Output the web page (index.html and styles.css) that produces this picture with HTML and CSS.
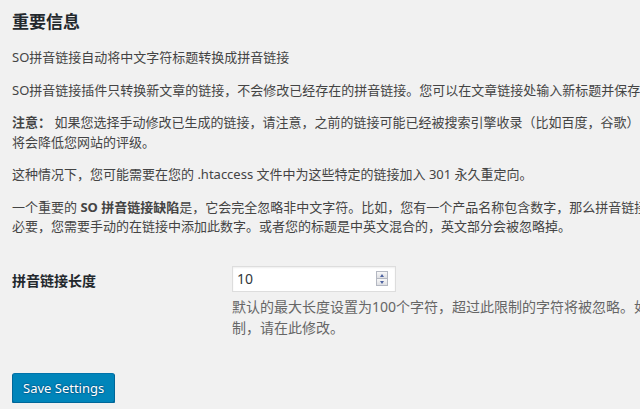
FILE: index.html
```html
<!DOCTYPE html>
<html lang="zh-CN">
<head>
    <meta charset="UTF-8">
    <meta name="viewport" content="width=device-width, initial-scale=1.0">
    <title>SO 拼音链接设置</title>
    <link rel="stylesheet" href="styles.css">
</head>
<body>
    <div class="wrap">
        <h2>重要信息</h2>
        <p>SO拼音链接自动将中文字符标题转换成拼音链接</p>
        <p>SO拼音链接插件只转换新文章的链接，不会修改已经存在的拼音链接。您可以在文章链接处输入新标题并保存，即可更新。</p>
        <p><strong>注意：</strong> 如果您选择手动修改已生成的链接，请注意，之前的链接可能已经被搜索引擎收录（比如百度，谷歌），修改后的链接将会降低您网站的评级。</p>
        <p>这种情况下，您可能需要在您的 .htaccess 文件中为这些特定的链接加入 301 永久重定向。</p>
        <p>一个重要的 <strong>SO 拼音链接缺陷</strong>是，它会完全忽略非中文字符。比如，您有一个产品名称包含数字，那么拼音链接忽略它，如有必要，您需要手动的在链接中添加此数字。或者您的标题是中英文混合的，英文部分会被忽略掉。</p>

        <form>
            <table class="form-table">
                <tr>
                    <th scope="row"><label for="slug-length">拼音链接长度</label></th>
                    <td>
                        <div class="number-field">
                            <input type="text" id="slug-length" value="10">
                            <span class="spin">
                                <span class="spin-btn spin-up"></span>
                                <span class="spin-btn spin-down"></span>
                            </span>
                        </div>
                        <p class="description">默认的最大长度设置为100个字符，超过此限制的字符将被忽略。如需更长的限制，请在此修改。</p>
                    </td>
                </tr>
            </table>
            <p class="submit"><button type="button" class="button-primary">Save Settings</button></p>
        </form>
    </div>
</body>
</html>
```

FILE: styles.css
```css
html, body {
    margin: 0;
    padding: 0;
    overflow: hidden;
}
body {
    background: #f1f1f1;
    color: #444;
    font-family: "Noto Sans", "Noto Sans CJK SC", sans-serif;
    font-size: 13px;
    line-height: 1.5;
    text-spacing-trim: space-all;
}
.wrap {
    width: 724px;
    padding: 0 12px;
}
h2 {
    color: #23282d;
    font-size: 17px;
    line-height: 22px;
    font-weight: 700;
    margin: 11px 0 15px;
}
p {
    margin: 13px 0;
}
strong {
    font-weight: 700;
}
.form-table {
    width: 100%;
    border-collapse: collapse;
    border-spacing: 0;
    margin: 0;
}
.form-table th {
    width: 200px;
    padding: 20px 10px 20px 0;
    text-align: left;
    vertical-align: top;
    color: #23282d;
    font-size: 14px;
    font-weight: 700;
    line-height: 21px;
}
.form-table td {
    padding: 15px 10px;
    vertical-align: top;
    font-size: 14px;
    line-height: 21px;
}
.number-field {
    display: flex;
    align-items: center;
    box-sizing: border-box;
    width: 164px;
    height: 26px;
    margin: 1px 0;
    background: #fff;
    border: 1px solid #ddd;
    box-shadow: inset 0 1px 2px rgba(0, 0, 0, 0.07);
}
.number-field input {
    flex: 1;
    min-width: 0;
    border: none;
    outline: none;
    background: transparent;
    padding: 0 4px;
    font-family: inherit;
    font-size: 14px;
    color: #32373c;
}
.spin {
    display: flex;
    flex-direction: column;
    margin-right: 7px;
}
.spin-btn {
    position: relative;
    box-sizing: border-box;
    width: 12px;
    height: 8px;
    border: 1px solid #b4b8c2;
    background: linear-gradient(#f8f8f8, #dedfe3);
}
.spin-down {
    margin-top: -1px;
}
.spin-btn::after {
    content: "";
    position: absolute;
    left: 3px;
    top: 2px;
    border-left: 2.5px solid transparent;
    border-right: 2.5px solid transparent;
}
.spin-up::after {
    border-bottom: 3px solid #4d62a0;
}
.spin-down::after {
    border-top: 3px solid #4d62a0;
}
.form-table td p.description {
    margin: 4px 0 0;
    color: #666;
}
.submit {
    margin: 20px 0 0;
}
.button-primary {
    display: inline-block;
    box-sizing: border-box;
    height: 30px;
    line-height: 28px;
    padding: 0 10px 2px;
    font-family: inherit;
    font-size: 13px;
    color: #fff;
    background: #0085ba;
    border: 1px solid;
    border-color: #0073aa #006799 #006799;
    border-radius: 3px;
    box-shadow: 0 1px 0 #006799;
    text-shadow: 0 -1px 1px #006799, 1px 0 1px #006799, 0 1px 1px #006799, -1px 0 1px #006799;
    cursor: pointer;
}
```
